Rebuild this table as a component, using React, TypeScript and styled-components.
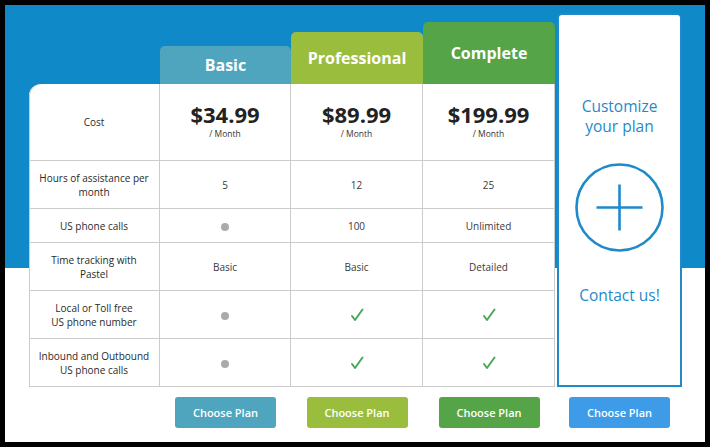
import styled, { createGlobalStyle } from "styled-components";

const GlobalStyle = createGlobalStyle`
  html, body {
    margin: 0;
    padding: 0;
    background: #000;
  }
  * {
    box-sizing: border-box;
  }
`;

type Value = string | "dot" | "check";

const plans = [
  { name: "Basic", price: "$34.99", color: "#4fa5bd", tab: 38 },
  { name: "Professional", price: "$89.99", color: "#9bbd3e", tab: 52 },
  { name: "Complete", price: "$199.99", color: "#56a448", tab: 62 },
];

const rows: { label: string[]; values: Value[]; height: number }[] = [
  { label: ["Hours of assistance per", "month"], values: ["5", "12", "25"], height: 48 },
  { label: ["US phone calls"], values: ["dot", "100", "Unlimited"], height: 34 },
  { label: ["Time tracking with", "Pastel"], values: ["Basic", "Basic", "Detailed"], height: 48 },
  { label: ["Local or Toll free", "US phone number"], values: ["dot", "check", "check"], height: 48 },
  { label: ["Inbound and Outbound", "US phone calls"], values: ["dot", "check", "check"], height: 48 },
];

const COLS = "131px 131px 132px 132px";

function Check() {
  return (
    <svg width="14" height="14" viewBox="0 0 14 14">
      <polyline
        points="2,8 5,12 12.5,1.5"
        fill="none"
        stroke="#4aa85a"
        strokeWidth="2"
        strokeLinecap="round"
        strokeLinejoin="round"
      />
    </svg>
  );
}

function renderValue(v: Value) {
  if (v === "dot") return <Dot />;
  if (v === "check") return <Check />;
  return v;
}

export default function App() {
  return (
    <>
      <GlobalStyle />
      <Frame>
        <Layout>
          <LeftPart>
            <HeaderRow>
              <span />
              {plans.map((p) => (
                <Tab key={p.name} $color={p.color} $height={p.tab}>
                  {p.name}
                </Tab>
              ))}
            </HeaderRow>
            <TableCard>
              <LabelCell $height={77}>Cost</LabelCell>
              {plans.map((p) => (
                <PriceCell key={p.name}>
                  <Price>{p.price}</Price>
                  <Per>/ Month</Per>
                </PriceCell>
              ))}
              {rows.map((r) => (
                <Row key={r.label.join(" ")} r={r} />
              ))}
            </TableCard>
            <ButtonRow>
              <span />
              {plans.map((p) => (
                <ButtonSlot key={p.name}>
                  <PlanButton $color={p.color}>Choose Plan</PlanButton>
                </ButtonSlot>
              ))}
            </ButtonRow>
          </LeftPart>
          <RightPart>
            <CustomCard>
              <CustomTitle>
                Customize
                <br />
                your plan
              </CustomTitle>
              <PlusCircle>
                <svg width="89" height="89" viewBox="0 0 89 89">
                  <circle cx="44.5" cy="44.5" r="43" fill="none" stroke="#1f8ac9" strokeWidth="2.6" />
                  <line x1="21.5" y1="44.5" x2="67.5" y2="44.5" stroke="#1f8ac9" strokeWidth="2.6" />
                  <line x1="44.5" y1="21.5" x2="44.5" y2="67.5" stroke="#1f8ac9" strokeWidth="2.6" />
                </svg>
              </PlusCircle>
              <ContactText>Contact us!</ContactText>
            </CustomCard>
            <ButtonSlot>
              <PlanButton $color="#3d9be7">Choose Plan</PlanButton>
            </ButtonSlot>
          </RightPart>
        </Layout>
      </Frame>
    </>
  );
}

function Row({ r }: { r: { label: string[]; values: Value[]; height: number } }) {
  return (
    <>
      <LabelCell $height={r.height}>
        {r.label.map((l) => (
          <div key={l}>{l}</div>
        ))}
      </LabelCell>
      {r.values.map((v, i) => (
        <ValueCell key={i} $height={r.height}>
          {renderValue(v)}
        </ValueCell>
      ))}
    </>
  );
}

const Frame = styled.div`
  width: 710px;
  height: 447px;
  border: 5px solid #000;
  background: linear-gradient(#1089c8 0, #1089c8 263px, #fff 263px);
  padding: 8px 0 0 24px;
  font-family: "Open Sans", "Liberation Sans", sans-serif;
  color: #333;
`;

const Layout = styled.div`
  display: flex;
  align-items: flex-start;
`;

const LeftPart = styled.div`
  display: flex;
  flex-direction: column;
`;

const HeaderRow = styled.div`
  display: grid;
  grid-template-columns: ${COLS};
  height: 71px;
  align-items: end;
`;

const Tab = styled.div<{ $color: string; $height: number }>`
  height: ${({ $height }) => $height}px;
  background: ${({ $color }) => $color};
  border-radius: 5px 5px 0 0;
  color: #fff;
  font-weight: 700;
  font-size: 16px;
  display: flex;
  align-items: center;
  justify-content: center;
  padding-bottom: 1px;
`;

const TableCard = styled.div`
  display: grid;
  grid-template-columns: ${COLS};
  background: #fff;
  border-top-left-radius: 12px;
  overflow: hidden;
  box-shadow: inset 1px 0 0 #ccc;
`;

const Cell = styled.div<{ $height?: number }>`
  height: ${({ $height }) => $height ?? 77}px;
  border-right: 1px solid #ccc;
  border-bottom: 1px solid #ccc;
  display: flex;
  flex-direction: column;
  align-items: center;
  justify-content: center;
  text-align: center;
`;

const LabelCell = styled(Cell)`
  font-size: 10px;
  line-height: 14px;
  color: #2a2a2a;
  padding: 0 6px;
`;

const ValueCell = styled(Cell)`
  font-size: 10px;
  color: #3a3a3a;
`;

const PriceCell = styled(Cell)`
  height: 77px;
  justify-content: flex-start;
  padding-top: 16px;
`;

const Price = styled.div`
  font-size: 22px;
  font-weight: 700;
  line-height: 28px;
  color: #222;
`;

const Per = styled.div`
  font-size: 8.5px;
  line-height: 11px;
  color: #333;
`;

const Dot = styled.span`
  width: 8px;
  height: 8px;
  border-radius: 50%;
  background: #aaa;
  margin-top: 2px;
`;

const ButtonRow = styled.div`
  display: grid;
  grid-template-columns: ${COLS};
  margin-top: 10px;
`;

const ButtonSlot = styled.div`
  display: flex;
  justify-content: center;
`;

const PlanButton = styled.button<{ $color: string }>`
  width: 101px;
  height: 31px;
  border: 0;
  border-radius: 3px;
  background: ${({ $color }) => $color};
  color: #fff;
  font-family: "Open Sans", "Liberation Sans", sans-serif;
  font-size: 11px;
  font-weight: 600;
  padding: 0;
`;

const RightPart = styled.div`
  display: flex;
  flex-direction: column;
  margin-left: 2px;
  width: 125px;
  gap: 10px;
`;

const CustomCard = styled.div`
  height: 374px;
  background: #fff;
  border: 2px solid #1f8ac9;
  border-radius: 5px 5px 0 0;
  display: flex;
  flex-direction: column;
  align-items: center;
  justify-content: center;
  color: #1f8ac9;
`;

const CustomTitle = styled.div`
  font-size: 15.5px;
  line-height: 20px;
  text-align: center;
`;

const PlusCircle = styled.div`
  margin-top: 27px;
  height: 89px;
`;

const ContactText = styled.div`
  margin-top: 33px;
  font-size: 15.5px;
  line-height: 20px;
`;
